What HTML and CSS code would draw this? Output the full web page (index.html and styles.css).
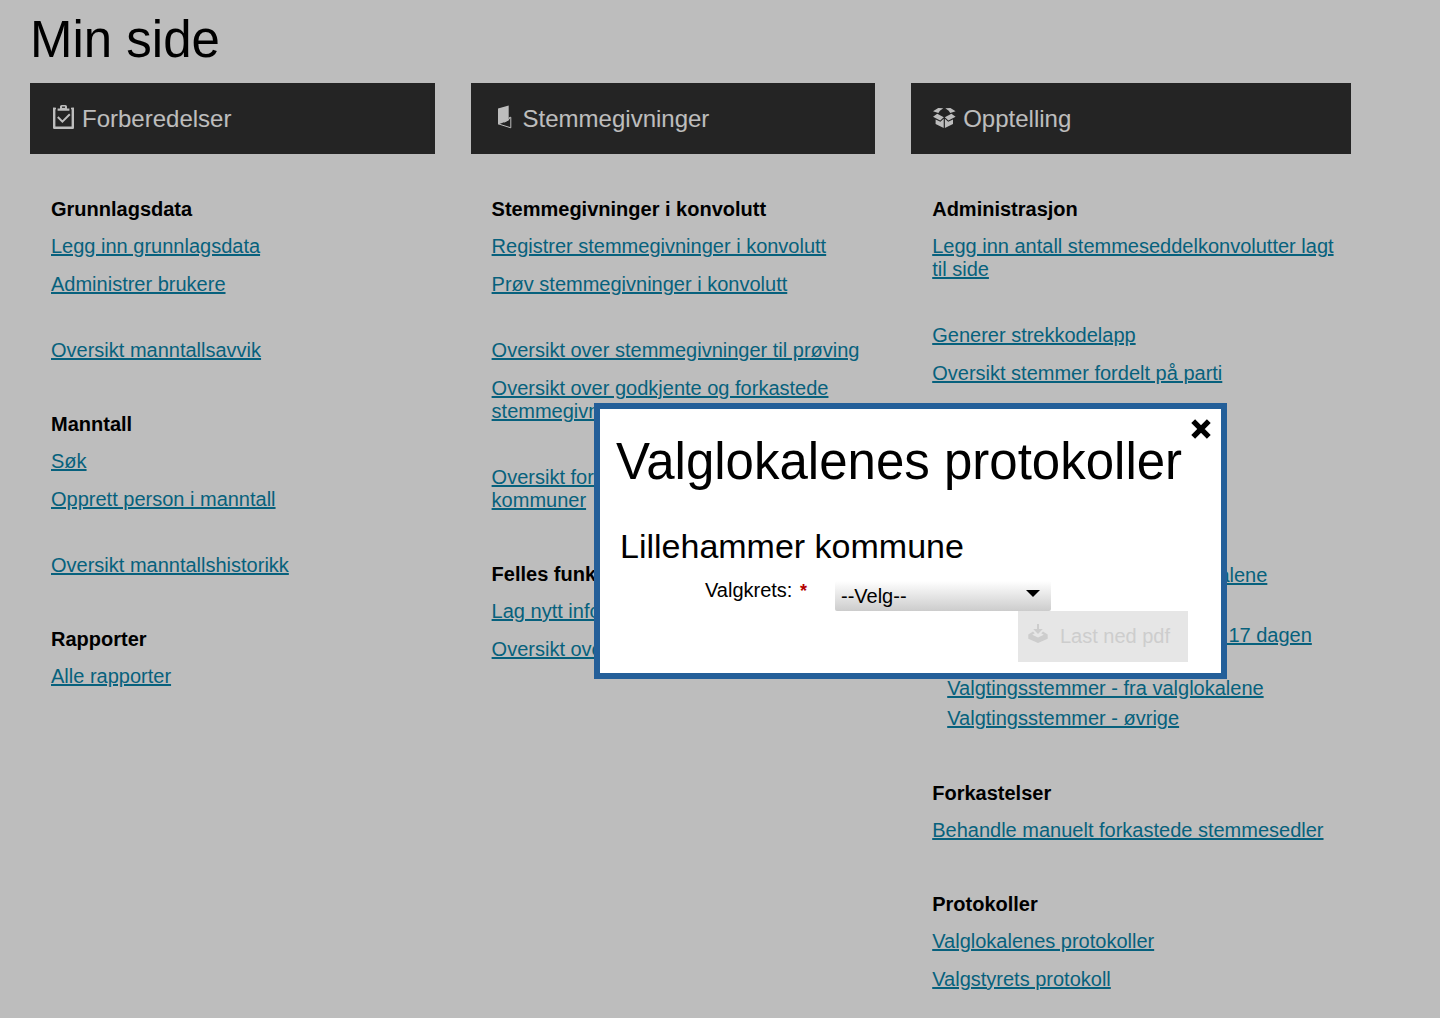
FILE: index.html
```html
<!DOCTYPE html>
<html lang="no">
<head>
    <meta charset="UTF-8">
    <meta name="viewport" content="width=device-width, initial-scale=1.0">
    <title>Min side</title>
    <link rel="stylesheet" href="styles.css">
</head>
<body>
    <main class="page">
        <h1>Min side</h1>
        <div class="columns">
            <div class="column">
                <h2 class="column-header">
                    <svg class="header-icon" viewBox="0 0 24 24" aria-hidden="true">
                        <path d="M2.2 2.7V22.8H20.8V2.7" fill="none" stroke="currentColor" stroke-width="2.4" stroke-linejoin="round"/>
                        <path d="M1 2.7h3v1.6H1zM19 2.7h3v1.6h-3zM5.6 3.4h2.4V1.6Q8 0 9.7 0h3.6Q15 0 15 1.6v1.8h2.4v2.4H5.6z" fill="currentColor"/>
                        <path d="M10 2.2h3" stroke="#313131" stroke-width="1.3"/>
                        <path d="M5.8 12l4.6 4.6 7.4-7.4" fill="none" stroke="currentColor" stroke-width="2"/>
                    </svg>
                    Forberedelser
                </h2>
                <div class="section">
                    <h3>Grunnlagsdata</h3>
                    <ul>
                        <li><a href="#">Legg inn grunnlagsdata</a></li>
                        <li><a href="#">Administrer brukere</a></li>
                        <li class="split"><a href="#">Oversikt manntallsavvik</a></li>
                    </ul>
                </div>
                <div class="section">
                    <h3>Manntall</h3>
                    <ul>
                        <li><a href="#">Søk</a></li>
                        <li><a href="#">Opprett person i manntall</a></li>
                        <li class="split"><a href="#">Oversikt manntallshistorikk</a></li>
                    </ul>
                </div>
                <div class="section">
                    <h3>Rapporter</h3>
                    <ul>
                        <li><a href="#">Alle rapporter</a></li>
                    </ul>
                </div>
            </div>

            <div class="column">
                <h2 class="column-header">
                    <svg class="header-icon" viewBox="0 0 24 24" aria-hidden="true">
                        <path d="M5 3.6L15.7.4v15L5 19.4z" fill="currentColor"/>
                        <path d="M5.4 18.9L17.8 22.8V12.2l-2.1.8M11.5 17.3L17.4 13" fill="none" stroke="currentColor" stroke-width="1"/>
                    </svg>
                    Stemmegivninger
                </h2>
                <div class="section">
                    <h3>Stemmegivninger i konvolutt</h3>
                    <ul>
                        <li><a href="#">Registrer stemmegivninger i konvolutt</a></li>
                        <li><a href="#">Prøv stemmegivninger i konvolutt</a></li>
                        <li class="split"><a href="#">Oversikt over stemmegivninger til prøving</a></li>
                        <li><a href="#">Oversikt over godkjente og forkastede stemmegivninger</a></li>
                        <li class="split"><a href="#">Oversikt forhåndsstemmer fra andre kommuner</a></li>
                    </ul>
                </div>
                <div class="section">
                    <h3>Felles funksjoner</h3>
                    <ul>
                        <li><a href="#">Lag nytt informasjonsbrev</a></li>
                        <li><a href="#">Oversikt over brev</a></li>
                    </ul>
                </div>
            </div>

            <div class="column">
                <h2 class="column-header">
                    <svg class="header-icon" viewBox="0 0 24 24" aria-hidden="true">
                        <g fill="currentColor">
                            <path d="M0 6.2L5.2 3l5.1.2-3.4 2.5L5.4 8z"/>
                            <path d="M22.6 6.2L17.4 3l-5.1.2 3.4 2.5L17.2 8z"/>
                            <path d="M0 11.8L4.2 8.8l6.6 3.4L7.2 15.6z"/>
                            <path d="M22.6 11.8l-4.2-3-6.6 3.4 3.6 3.4z"/>
                            <path d="M2.6 14.6l4.8 2.2 3.3-3V23L2.6 19z"/>
                            <path d="M20 14.6l-4.8 2.2-3.3-3V23L20 19z"/>
                        </g>
                    </svg>
                    Opptelling
                </h2>
                <div class="section">
                    <h3>Administrasjon</h3>
                    <ul>
                        <li><a href="#">Legg inn antall stemmeseddelkonvolutter lagt til side</a></li>
                        <li class="split"><a href="#">Generer strekkodelapp</a></li>
                        <li><a href="#">Oversikt stemmer fordelt på parti</a></li>
                    </ul>
                </div>
                <div class="section">
                    <h3>Telling</h3>
                    <ul>
                        <li>
                            <a href="#">Registrer tellinger</a>
                            <ul class="sub">
                                <li><a href="#">Forhåndsstemmer</a></li>
                                <li><a href="#">Forhåndsstemmer - ordinære</a></li>
                                <li><a href="#">Forhåndsstemmer - fra valglokalene</a></li>
                                <li><a href="#">Forhåndsstemmer - øvrige</a></li>
                                <li><a href="#">Forhåndsstemmer - mottatt per 17 dagen valgdagen</a></li>
                                <li><a href="#">Valgtingsstemmer - fra valglokalene</a></li>
                                <li><a href="#">Valgtingsstemmer - øvrige</a></li>
                            </ul>
                        </li>
                    </ul>
                </div>
                <div class="section">
                    <h3>Forkastelser</h3>
                    <ul>
                        <li><a href="#">Behandle manuelt forkastede stemmesedler</a></li>
                    </ul>
                </div>
                <div class="section">
                    <h3>Protokoller</h3>
                    <ul>
                        <li><a href="#">Valglokalenes protokoller</a></li>
                        <li><a href="#">Valgstyrets protokoll</a></li>
                    </ul>
                </div>
            </div>
        </div>
    </main>

    <div class="overlay"></div>

    <div class="dialog" role="dialog" aria-modal="true" aria-labelledby="dialog-title">
        <button type="button" class="close" aria-label="Lukk">
            <svg viewBox="0 0 20 20" aria-hidden="true">
                <path d="M2.2 2.2L17.8 17.8M17.8 2.2L2.2 17.8" stroke="#000" stroke-width="5.4"/>
            </svg>
        </button>
        <h1 id="dialog-title">Valglokalenes protokoller</h1>
        <h2>Lillehammer kommune</h2>
        <form>
            <div class="row">
                <label for="valgkrets">Valgkrets: <span class="required">*</span></label>
                <div class="select">
                    <select id="valgkrets">
                        <option>--Velg--</option>
                    </select>
                    <svg class="arrow" viewBox="0 0 14 7" aria-hidden="true"><path d="M0 0h14L7 7z"/></svg>
                </div>
            </div>
            <button type="button" class="download" disabled>
                <svg viewBox="0 0 20 20" aria-hidden="true">
                    <path d="M9 0h2v5h3.8L10 10 5.2 5H9z" fill="currentColor"/>
                    <path d="M.3 10.4L5 7.6l1.8 1.6-2.6 1.5L10 13.4l5.8-2.7-2.6-1.5L15 7.6l4.7 2.8v4.4L10 19 .3 14.8z" fill="currentColor"/>
                </svg>
                Last ned pdf
            </button>
        </form>
    </div>
</body>
</html>
```

FILE: styles.css
```css
* {
    box-sizing: border-box;
}

body {
    margin: 0;
    font-family: "Liberation Sans", Arial, sans-serif;
    font-size: 20px;
    line-height: 23px;
    color: #000;
    background-color: #fff;
}

h1, h2, h3, ul {
    margin: 0;
    padding: 0;
}

h1 {
    font-size: 51px;
    line-height: 58px;
    font-weight: normal;
}

ul {
    list-style: none;
}

a {
    color: #0a84a9;
}

.page {
    padding: 11px 89px 24px 30px;
}

.columns {
    display: grid;
    grid-template-columns: 23fr 23fr 25fr;
    gap: 36px;
    margin-top: 14px;
}

.column-header {
    display: flex;
    align-items: center;
    gap: 6px;
    height: 71px;
    margin-bottom: 44px;
    padding: 0 22px;
    font-size: 24px;
    line-height: 28px;
    font-weight: normal;
    color: #fff;
    background-color: #313131;
}

.header-icon {
    width: 24px;
    height: 24px;
    margin-bottom: 4px;
}

.section {
    padding-left: 21px;
}

.section + .section {
    margin-top: 51px;
}

.section h3 {
    margin-bottom: 14px;
    font-size: 20px;
    line-height: 23px;
}

.section li + li {
    margin-top: 15px;
}

.section li.split {
    margin-top: 43px;
}

.section .sub {
    margin-top: 8px;
    padding: 0 0 1px 15px;
}

.section .sub li + li {
    margin-top: 7px;
}

.overlay {
    position: fixed;
    inset: 0;
    background-color: rgba(0, 0, 0, 0.26);
}

/* Dialog */
.dialog {
    position: fixed;
    top: 403px;
    left: 594px;
    width: 633px;
    padding: 24px 33px 11px 16px;
    border: 6px solid #245f99;
    background-color: #fff;
}

.dialog h1 {
    white-space: nowrap;
}

.dialog h2 {
    margin: 36px 0 13px;
    padding-left: 4px;
    font-size: 34px;
    line-height: 39px;
    font-weight: normal;
}

.dialog form {
    display: flex;
    flex-direction: column;
}

.close {
    position: absolute;
    top: 10px;
    right: 10px;
    width: 20px;
    height: 20px;
    padding: 0;
    border: 0;
    background: none;
    cursor: pointer;
}

.close svg {
    display: block;
}

.row {
    display: grid;
    grid-template-columns: 191px 216px;
    gap: 28px;
    height: 32px;
}

.row label {
    text-align: right;
}

.required {
    margin-left: 2px;
    font-size: 18px;
    font-weight: bold;
    color: #b30000;
}

.select {
    position: relative;
    align-self: end;
}

.select select {
    display: block;
    width: 100%;
    height: 30px;
    padding: 0 6px;
    border: 0;
    border-radius: 2px;
    appearance: none;
    font: inherit;
    color: #000;
    background: linear-gradient(#fff, #ccc);
}

.arrow {
    position: absolute;
    top: 9px;
    right: 11px;
    width: 14px;
    height: 7px;
    pointer-events: none;
}

.download {
    display: flex;
    align-items: center;
    gap: 12px;
    align-self: flex-end;
    height: 51px;
    padding: 0 18px 0 10px;
    border: 0;
    font: inherit;
    color: #cdcdcd;
    background-color: #e6e6e6;
}

.download svg {
    width: 20px;
    height: 20px;
    margin-bottom: 6px;
}
```
